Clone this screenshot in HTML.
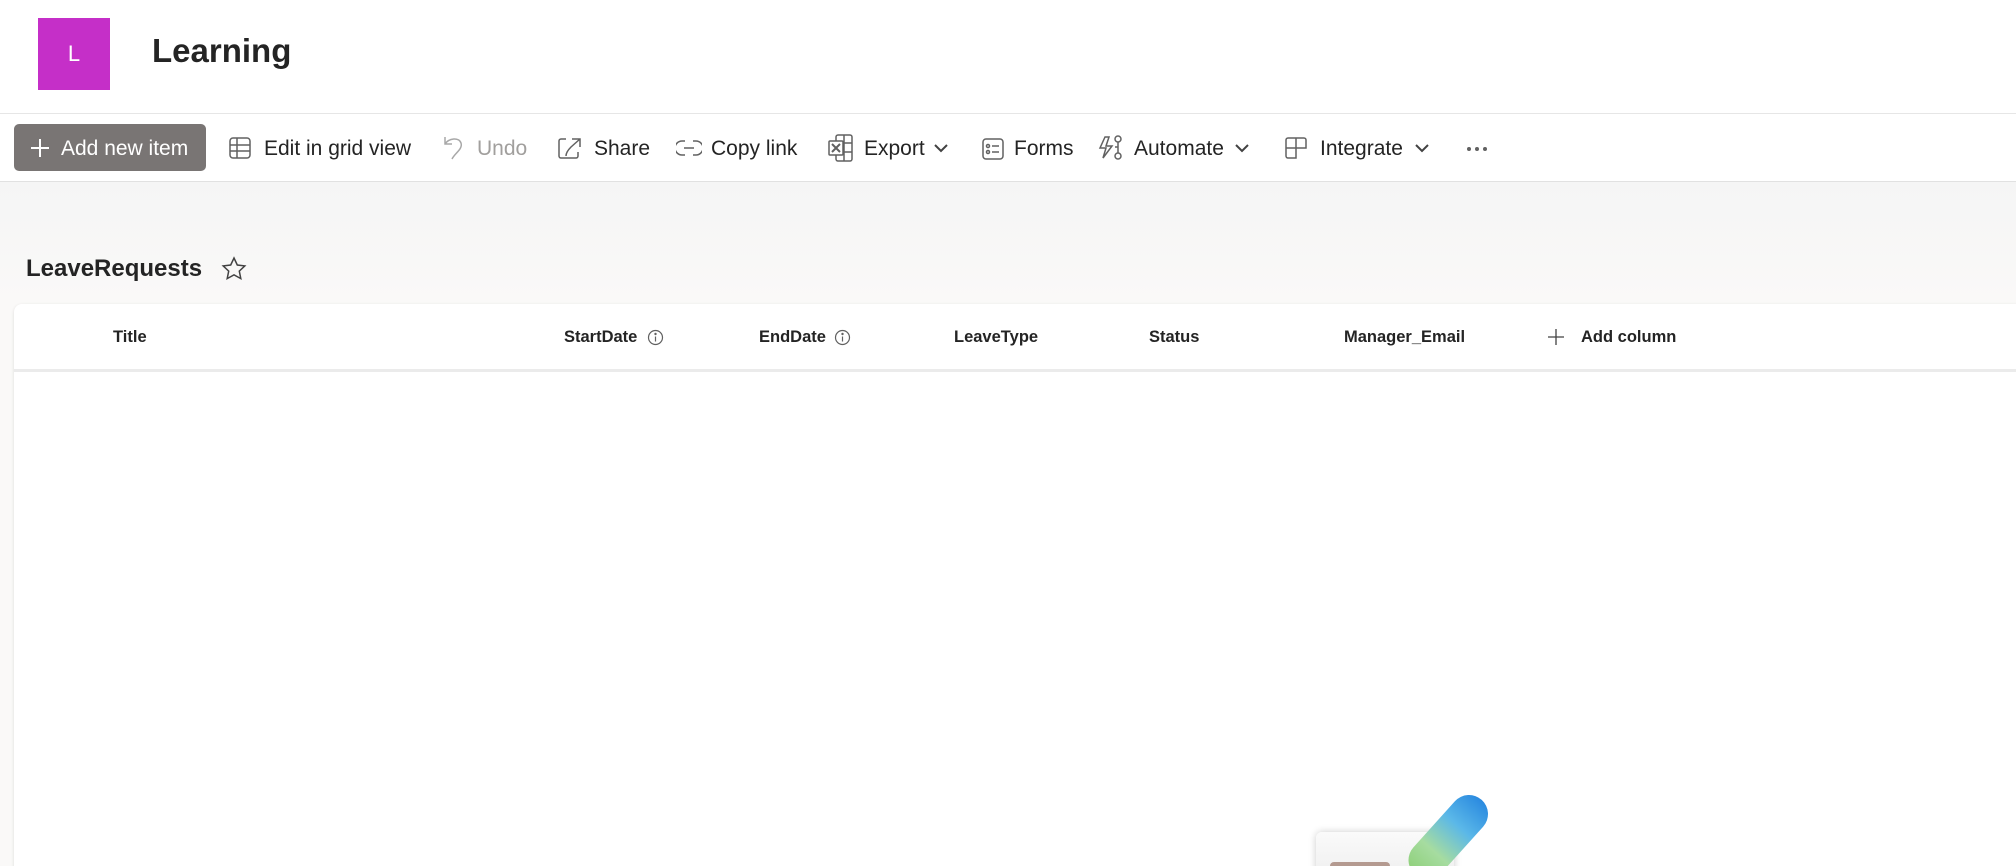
<!DOCTYPE html>
<html><head><meta charset="utf-8"><style>
*{margin:0;padding:0;box-sizing:border-box}
html,body{width:2016px;height:866px;overflow:hidden}
body{background:#fff;font-family:"Liberation Sans",sans-serif;color:#242424;position:relative}
#w{position:absolute;left:0;top:0;width:2016px;height:866px;overflow:hidden}
.a{position:absolute;white-space:nowrap}
.tb{font-size:21px;top:137px;line-height:24px}
.hd{font-size:16.5px;font-weight:bold;top:326px;line-height:22px;color:#242424}
</style></head><body><div id="w">
<div class="a" style="left:38px;top:18px;width:72px;height:72px;background:#c52fc8;color:#fff;font-size:22px;text-align:center;line-height:72px">L</div>
<div class="a" style="left:152px;top:32px;font-size:33px;font-weight:bold;color:#242424">Learning</div>
<div class="a" style="left:0;top:113px;width:2016px;height:1px;background:#e6e6e6"></div>
<div class="a" style="left:0;top:181px;width:2016px;height:1px;background:#e1e1e1"></div>
<div class="a" style="left:0;top:182px;width:2016px;height:684px;background:linear-gradient(#f5f5f5,#faf9f8 120px)"></div>
<div class="a" style="left:14px;top:124px;width:192px;height:47px;background:#797574;border-radius:5px"></div>
<svg class="a" style="left:30px;top:138px" width="20" height="20"><path d="M10 1v18M1 10h18" stroke="#fff" stroke-width="2"/></svg>
<div class="a tb" style="left:61px;color:#fff">Add new item</div>
<svg class="a" style="left:229px;top:137px" width="22" height="22" fill="none" stroke="#616161" stroke-width="1.5"><rect x="1" y="1" width="20" height="20" rx="3"/><path d="M1 8h20M1 14h20M8 1v20"/></svg>
<div class="a tb" style="left:264px">Edit in grid view</div>
<svg class="a" style="left:443px;top:135px" width="22" height="26" fill="none" stroke="#a8a8a8" stroke-width="1.5"><path d="M2 2v7h7M2 9C6 3 16 2 18 8c2 6-6 10-9 16"/></svg>
<div class="a tb" style="left:477px;color:#a19f9d">Undo</div>
<svg class="a" style="left:558px;top:137px" width="24" height="22" fill="none" stroke="#616161" stroke-width="1.5"><path d="M8 2H3a2 2 0 0 0-2 2v15a2 2 0 0 0 2 2h15a2 2 0 0 0 2-2v-4M14 2h8v8M22 2l-9 8c-3 3-5 6-5 9"/></svg>
<div class="a tb" style="left:594px">Share</div>
<svg class="a" style="left:676px;top:139px" width="26" height="18" fill="none" stroke="#616161" stroke-width="1.5"><path d="M9 2H6a7 7 0 0 0 0 14h3M17 2h3a7 7 0 0 1 0 14h-3M8 9h10"/></svg>
<div class="a tb" style="left:711px">Copy link</div>
<svg class="a" style="left:828px;top:134px" width="26" height="28" fill="none" stroke="#616161" stroke-width="1.5"><rect x="8" y="1" width="16" height="26" rx="2"/><path d="M8 9h16M8 18h16M16 1v26"/><rect x="1" y="7" width="14" height="14" rx="1" fill="#fff"/><path d="M4 10l8 8M12 10l-8 8" stroke-width="2"/></svg>
<div class="a tb" style="left:864px">Export</div>
<svg class="a" style="left:934px;top:143px" width="14" height="10" fill="none" stroke="#424242" stroke-width="2"><path d="M1 2l6 6 6-6"/></svg>
<svg class="a" style="left:982px;top:138px" width="22" height="22" fill="none" stroke="#616161" stroke-width="1.5"><rect x="1" y="1" width="20" height="20" rx="3"/><circle cx="6" cy="8" r="1.5"/><circle cx="6" cy="14" r="1.5"/><path d="M10 8h7M10 14h7"/></svg>
<div class="a tb" style="left:1014px">Forms</div>
<svg class="a" style="left:1097px;top:135px" width="26" height="26" fill="none" stroke="#616161" stroke-width="1.5"><path d="M8 2L3 13h6l-3 10 9-12h-6l3-9z"/><circle cx="21" cy="4" r="3"/><circle cx="21" cy="21" r="3"/><path d="M21 7v11M21 12h-3"/></svg>
<div class="a tb" style="left:1134px">Automate</div>
<svg class="a" style="left:1235px;top:143px" width="14" height="10" fill="none" stroke="#424242" stroke-width="2"><path d="M1 2l6 6 6-6"/></svg>
<svg class="a" style="left:1285px;top:137px" width="22" height="22" fill="none" stroke="#616161" stroke-width="1.5"><path d="M1 3a2 2 0 0 1 2-2h16a2 2 0 0 1 2 2v8H11v10H3a2 2 0 0 1-2-2zM11 1v10M1 11h10"/></svg>
<div class="a tb" style="left:1320px">Integrate</div>
<svg class="a" style="left:1415px;top:143px" width="14" height="10" fill="none" stroke="#424242" stroke-width="2"><path d="M1 2l6 6 6-6"/></svg>
<svg class="a" style="left:1466px;top:146px" width="22" height="6" fill="#616161"><circle cx="3" cy="3" r="2"/><circle cx="11" cy="3" r="2"/><circle cx="19" cy="3" r="2"/></svg>
<div class="a" style="left:26px;top:255px;font-size:24px;font-weight:bold">LeaveRequests</div>
<svg class="a" style="left:221px;top:256px" width="26" height="26" fill="none" stroke="#424242" stroke-width="1.5"><path d="M13 2l3.3 7 7.5.9-5.5 5.2 1.5 7.5L13 18.9l-6.8 3.7 1.5-7.5L2.2 9.9 9.7 9z"/></svg>
<div class="a" style="left:14px;top:304px;width:2010px;height:600px;background:#fff;border-radius:8px;box-shadow:0 1px 3px rgba(0,0,0,.12)"></div>
<div class="a" style="left:14px;top:369px;width:2002px;height:3px;background:#ebebeb"></div>
<div class="a hd" style="left:113px">Title</div>
<div class="a hd" style="left:564px">StartDate</div>
<svg class="a" style="left:647px;top:329px" width="17" height="17" fill="none" stroke="#616161" stroke-width="1.2"><circle cx="8.5" cy="8.5" r="7"/><path d="M8.5 7.5v5"/><circle cx="8.5" cy="5" r=".6" fill="#616161"/></svg>
<div class="a hd" style="left:759px">EndDate</div>
<svg class="a" style="left:834px;top:329px" width="17" height="17" fill="none" stroke="#616161" stroke-width="1.2"><circle cx="8.5" cy="8.5" r="7"/><path d="M8.5 7.5v5"/><circle cx="8.5" cy="5" r=".6" fill="#616161"/></svg>
<div class="a hd" style="left:954px">LeaveType</div>
<div class="a hd" style="left:1149px">Status</div>
<div class="a hd" style="left:1344px">Manager_Email</div>
<svg class="a" style="left:1548px;top:329px" width="16" height="16"><path d="M8 0v16M0 8h16" stroke="#424242" stroke-width="1.3"/></svg>
<div class="a hd" style="left:1581px">Add column</div>
<div class="a" style="left:1316px;top:832px;width:138px;height:60px;background:linear-gradient(#fafafa,#ececec);border-radius:6px;box-shadow:0 0 8px rgba(0,0,0,.2)"></div>
<div class="a" style="left:1330px;top:862px;width:60px;height:10px;background:#b49a90;border-radius:4px"></div>
<div class="a" style="width:38px;height:100px;border-radius:19px;background:linear-gradient(#2a8ae0,#5bb8e8 35%,#a6dca0 70%,#8fd07a);transform:rotate(42deg);transform-origin:19px 19px;top:795px;left:1450px"></div>
</div></body></html>
